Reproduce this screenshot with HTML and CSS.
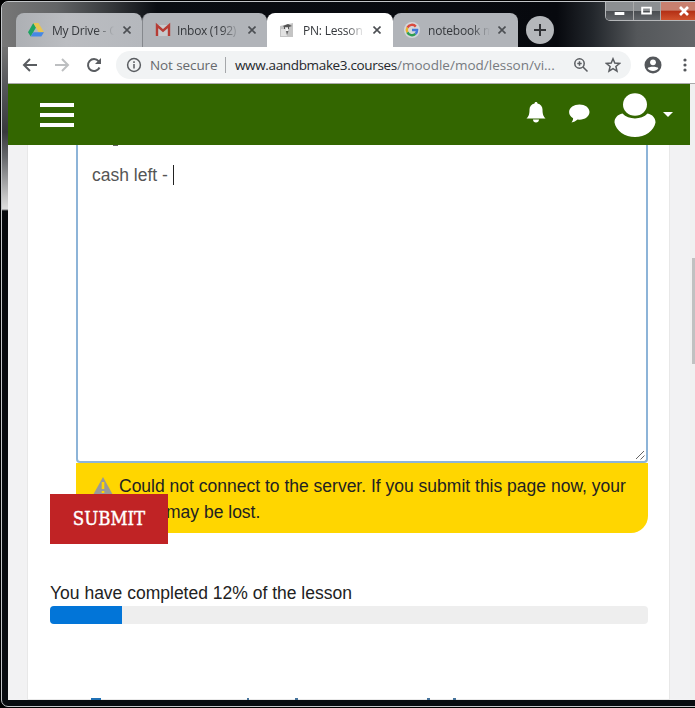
FILE: index.html
```html
<!DOCTYPE html>
<html lang="en">
<head>
<meta charset="utf-8">
<title>PN: Lesson</title>
<link rel="stylesheet" href="styles.css">
</head>
<body>
<div class="window">
  <div class="tabstrip">
    <div class="tab first">
      <svg class="fav" viewBox="0 0 16 16"><path fill="#1da462" d="M5.3 1 0 10.2 2.7 14.5 8 5.5z"/><path fill="#e8c552" d="M5.3 1h5.2L16 10.2h-5.3z"/><path fill="#4688e4" d="M5.3 10.2H16l-2.7 4.3H2.7z"/></svg>
      <span class="title">My Drive - G</span>
      <svg class="close" viewBox="0 0 8 8"><path d="m.5.5 7 7m0-7-7 7"/></svg>
    </div>
    <div class="tab second">
      <svg class="fav" viewBox="0 0 16 16"><path fill="#c8c9cc" d="M1 3h14v11H1z"/><path fill="none" stroke="#b63c35" stroke-width="2.4" d="M2 14V3.500l6 5.200 6-5.200V14"/></svg>
      <span class="title inbox">Inbox (192)</span>
      <svg class="close" viewBox="0 0 8 8"><path d="m.5.5 7 7m0-7-7 7"/></svg>
    </div>
    <div class="tab active">
      <svg class="fav" viewBox="0 0 16 16"><path fill="#c4c4c4" d="M1 4 14 1v14H1z"/><path fill="#e2e2e2" d="M2 7h4l2 7H2z"/><path fill="#555" d="m4 4 5-2 4 2-3 1v2H9V5L6 5v2H5V5z"/><path fill="#f4f4f4" d="M6.500 6H9v3H6.500z"/><path fill="#666" d="m7 9 1 4 1.500-4z"/></svg>
      <span class="title">PN: Lesson 1</span>
      <svg class="close" viewBox="0 0 8 8"><path d="m.5.5 7 7m0-7-7 7"/></svg>
    </div>
    <div class="tab last">
      <svg class="fav google" viewBox="0 0 16 16"><circle cx="8" cy="8" r="8" fill="#d5d7da"/><g fill="none" stroke-width="2.4"><path stroke="#d94b3f" d="M3.4 5.6A5.1 5.1 0 0 1 11.8 4.6"/><path stroke="#e8b52c" d="M3.4 10.4a5 5 0 0 1 0-4.8"/><path stroke="#2f9e50" d="M3.4 10.4a5.1 5.1 0 0 0 8 1.5"/><path stroke="#4579d8" d="M8 8h5.1a5.1 5.1 0 0 1-1.7 3.9"/></g></svg>
      <span class="title">notebook m</span>
      <svg class="close" viewBox="0 0 8 8"><path d="m.5.5 7 7m0-7-7 7"/></svg>
    </div>
    <svg class="newtab" viewBox="0 0 28 28"><circle cx="14" cy="14" r="14" fill="#b4b7bb"/><path d="M14 8v12M8 14h12" stroke="#303236" stroke-width="2"/></svg>
    <div class="controls">
      <svg class="min" viewBox="0 0 28 19"><path d="M9 10h10v3H9z" fill="#fff"/></svg>
      <svg class="max" viewBox="0 0 27 19"><path d="M8.500 5.500h9v6h-9z" fill="none" stroke="#fff" stroke-width="2"/></svg>
      <svg class="exit" viewBox="0 0 41 19"><path d="m19 5 8 8m0-8-8 8" stroke="#fff" stroke-width="2.700"/></svg>
    </div>
  </div>
  <div class="toolbar">
    <svg class="nav" viewBox="0 0 16 16"><path d="M15 8H2m6-6L2 8l6 6"/></svg>
    <svg class="nav forward" viewBox="0 0 16 16"><path d="M1 8h13M8 2l6 6-6 6"/></svg>
    <svg class="nav" viewBox="0 0 16 16"><path d="M13.500 10.500a6 6 0 1 1-.9-6.300L14 5.500"/><path d="M15 1v6H9z" fill="#5a5d61" stroke="none"/></svg>
    <div class="omnibox">
      <svg class="info" viewBox="0 0 16 16"><circle cx="8" cy="8" r="6.400"/><path d="M8 7v4.500M8 4.300v1.700"/></svg>
      <span class="insecure">Not secure</span>
      <span class="divider"></span>
      <span class="host">www.aandbmake3.courses</span><span class="path">/moodle/mod/lesson/vi...</span>
      <svg class="mag" viewBox="0 0 16 16"><circle cx="6.500" cy="6.500" r="4.700"/><path d="m10 10 4.500 4.500M6.500 4.300v4.400M4.300 6.500h4.400"/></svg>
      <svg class="star" viewBox="0 0 16 16"><path d="m8 1.800 1.800 4.300 4.700.4-3.600 3 1.100 4.600-4-2.400-4 2.400 1.100-4.600-3.600-3 4.700-.4z"/></svg>
    </div>
    <svg class="person" viewBox="0 0 18 18"><circle cx="9" cy="9" r="8.500" fill="#54575b"/><circle cx="9" cy="6.300" r="2.900" fill="#fff"/><path d="M3.600 12.300c1-2 9.800-2 10.800 0-2.500 3.500-8.300 3.500-10.800 0z" fill="#fff"/></svg>
    <svg class="more" viewBox="0 0 4 14"><g fill="#54575b"><circle cx="2" cy="2" r="1.600"/><circle cx="2" cy="7" r="1.600"/><circle cx="2" cy="12" r="1.600"/></g></svg>
  </div>
  <div class="viewport">
    <div class="scrollarea">
      <header class="navbar">
        <div class="burger"><i></i><i></i><i></i></div>
        <svg class="bell" viewBox="0 0 20 21"><path fill="#fff" d="M10 0c1 0 1.500.7 1.500 1.500 3.200.8 5 3 5 6 0 5 1 7 3 9H.5c2-2 3-4 3-9 0-3 1.800-5.200 5-6C8.500.7 9 0 10 0zM7 17.500h6c0 1.700-1.300 3-3 3s-3-1.300-3-3z"/></svg>
        <svg class="chat" viewBox="0 0 21 19"><path fill="#fff" d="M10.500.5C16 .5 20.500 3.600 20.500 8s-4.500 7.700-10 7.700l-2-.1c-1.700 1.600-3.700 2.600-6 2.800 1-1.200 1.600-2.600 1.600-4.200C1.600 12.700.1 10.700.1 8 .1 3.600 5 .5 10.500.5z"/></svg>
        <svg class="avatar" viewBox="0 0 42 44"><g fill="#fff"><ellipse cx="21" cy="11.500" rx="12" ry="11.300"/><path d="M8.500 20.500c6 6.500 19 6.500 25 0 5 1 8 4.500 8 9C40 38 31 44 21 44S2 38 .5 29.500c0-4.500 3-8 8-9z"/></g></svg>
        <svg class="caret" viewBox="0 0 10 5"><path fill="#fff" d="M0 0h10L5 5z"/></svg>
      </header>
      <main class="page">
        <div class="answer"><span class="tail"></span><span class="answer-text">cash left - </span><span class="cursor"></span>
          <svg class="grip" viewBox="0 0 10 10"><path d="M1 9 9 1M5.500 9.500l4-4" stroke="#666" fill="none"/></svg>
        </div>
        <div class="notice"><svg class="warn" viewBox="0 0 20 18"><path fill="#999" d="M10 0 20 18H0z"/><path d="M10 5v7M10 14v2" stroke="#ffd600" stroke-width="2.600"/></svg><span>Could not connect to the server. If you submit this page now, your</span><br><span class="last-line">may be lost.</span></div>
        <button class="submit">SUBMIT</button>
        <div class="progress-label">You have completed 12% of the lesson</div>
        <div class="progress"><div class="bar" style="width:12%"></div></div>
        <div class="next"><i class="wide"></i><i></i><i></i><i></i><i></i></div>
      </main>
    </div>
    <div class="scrollbar"><div class="thumb"></div></div>
  </div>
</div>
</body>
</html>
```
FILE: styles.css
```css
* { box-sizing: border-box; }
body { margin: 0; background: #000; overflow: hidden; }
svg { display: block; flex: none; }
.window {
  width: 703px; height: 706px; margin: 1px 0 1px 1px; padding: 0 0 6px 6px;
  border: 1px solid #c2c5c8; border-radius: 7px;
  background: linear-gradient(#777 0, #707070 50px, #55565a 85px, #38393c 130px, #65676a 155px, #c5c5c5 195px, #ddd 207px, #07090c 209px, #090c10 100%);
}
.tabstrip {
  display: flex; height: 45px; margin-left: -6px; padding: 11px 0 0 14px; border-radius: 6px 0 0 0;
  background: linear-gradient(90deg, #777 0, #626466 55px, #34373a 110px, #0a0d12 155px, #07090e 555px, #22262b 590px, #54575a 635px, #66686b 100%);
}
.tab { display: flex; align-items: center; height: 34px; border-radius: 8px 8px 0 0; background: #b1b4b9; font: 12px "Open Sans", sans-serif; color: #35383c; letter-spacing: -0.2px; }
.first { width: 126px; padding-left: 12px; background: linear-gradient(90deg, #adb0b4, #bbbdc1 40%, #b5b8bd); }
.second { width: 125px; padding-left: 12px; border-left: 1px solid #85888d; }
.active { width: 126px; padding-left: 12px; background: #fff; }
.last { width: 125px; padding-left: 11px; }
.fav { width: 16px; height: 16px; }
.title { width: 62px; margin: 0 5px 0 8px; overflow: hidden; white-space: nowrap; -webkit-mask-image: linear-gradient(90deg, #000 70%, transparent); mask-image: linear-gradient(90deg, #000 70%, transparent); }
.inbox { width: 63px; margin: 0 5px 0 6px; letter-spacing: -0.3px; }
.close { width: 8px; height: 8px; margin-left: 3px; }
.close path { stroke: #4c4f53; stroke-width: 1.6; }
.first .close { margin-left: 4px; }
.newtab { width: 28px; height: 28px; margin: 3px 0 0 8px; }
.controls { display: flex; height: 19px; margin: -11px 0 0 51px; border: 1px solid #b5b7b9; border-top: 0; border-radius: 0 0 0 5px; overflow: hidden; }
.min, .max { height: 19px; border-right: 1px solid #aaa; background: linear-gradient(#8c8f92 45%, #4b4e52 50%, #66696d); }
.min { width: 28px; } .max { width: 27px; }
.exit { width: 41px; height: 19px; background: linear-gradient(#c8806f 42%, #b53116 50%, #d45630); }
.toolbar { display: flex; align-items: center; height: 37px; padding-left: 14px; background: #fff; border-bottom: 1px solid #aaa; }
.nav { width: 16px; height: 16px; margin-right: 16px; fill: none; stroke: #5a5d61; stroke-width: 2; }
.forward { stroke: #bdbfc1; }
.omnibox { display: flex; align-items: center; width: 515px; height: 28px; margin-left: -2px; padding-left: 10px; border-radius: 14px; background: #f1f3f4; font: 13.5px "Open Sans", sans-serif; white-space: nowrap; }
.info { width: 16px; height: 16px; fill: none; stroke: #5a5d61; stroke-width: 1.5; }
.insecure { width: 67px; margin-left: 8px; color: #66696d; letter-spacing: -0.1px; }
.divider { width: 1px; height: 16px; margin: 0 9px 0 8px; background: #a5a7aa; }
.host { width: 162px; color: #25282c; letter-spacing: -0.35px; }
.path { width: 158px; color: #777a7f; }
.mag, .star { width: 16px; height: 16px; fill: none; stroke: #5a5d61; stroke-width: 1.5; }
.mag { margin-left: 18px; }
.star { margin-left: 16px; }
.person { width: 18px; height: 18px; margin-left: 13px; }
.more { width: 4px; height: 14px; margin-left: 21px; }
.viewport { display: flex; height: 616px; overflow: hidden; background: #f0f0f0; }
.scrollarea { width: 682px; background: #f2f2f3; }
.navbar { display: flex; align-items: flex-start; height: 61px; padding-left: 32px; background: #360; }
.burger { display: flex; flex-direction: column; gap: 6px; width: 34px; margin: 19px 452px 0 0; }
.burger i { height: 4px; background: #fff; }
.bell { width: 20px; height: 21px; margin-top: 18px; }
.chat { width: 21px; height: 19px; margin: 20px 0 0 23px; }
.avatar { width: 42px; height: 44px; margin: 9px 0 0 24px; }
.caret { width: 10px; height: 5px; margin: 28px 0 0 7px; }
.page { width: 643px; height: 555px; margin-left: 19px; padding: 0 21px 0 22px; border: 1px solid #e8e8e8; border-top: 0; background: #fff; font: 17.5px "Liberation Sans", sans-serif; color: #222; }
.answer { display: flex; align-items: flex-start; position: relative; height: 318px; margin-left: 26px; padding: 20px 0 0 14px; border: 2px solid #8db4d8; border-top: 0; border-radius: 0 0 4px 4px; color: #555; white-space: pre; }
.tail { position: absolute; left: 35px; top: 0; width: 5px; height: 1px; background: #666; }
.cursor { width: 1px; height: 20px; background: #222; }
.grip { position: absolute; right: 1px; bottom: 1px; width: 10px; height: 10px; }
.notice { height: 70px; margin-left: 26px; padding: 10px 0 0 17px; background: #ffd600; border-radius: 0 0 17px 0; line-height: 26px; white-space: nowrap; }
.warn { display: inline-block; width: 20px; height: 18px; margin-right: 6px; vertical-align: -3px; }
.last-line { margin-left: 73px; }
.submit { display: block; position: relative; width: 118px; height: 50px; margin: -39px 0 0; padding: 0 0 2px; border: 0; background: #c02325; color: #fff; font: 18.5px "DejaVu Serif Condensed", "DejaVu Serif", serif; font-stretch: condensed; -webkit-text-stroke: 0.4px #fff; }
.progress-label { margin-top: 36px; height: 26px; line-height: 26px; white-space: nowrap; }
.progress { height: 18px; overflow: hidden; border-radius: 4px; background: #eee; }
.bar { height: 18px; background: #0275d8; }
.next { display: flex; margin: 74px 0 0 41px; }
.next i { width: 3px; height: 2px; margin-right: 129px; background: #46739b; }
.next i.wide { width: 10px; margin-right: 146px; background: #1f70b5; }
.next i:nth-child(2) { width: 2px; margin-right: 46px; }
.next i:nth-child(4) { margin-right: 23px; }
.scrollbar { width: 13px; padding: 174px 0 0 2px; }
.thumb { height: 106px; background: #c1c1c1; }
```
